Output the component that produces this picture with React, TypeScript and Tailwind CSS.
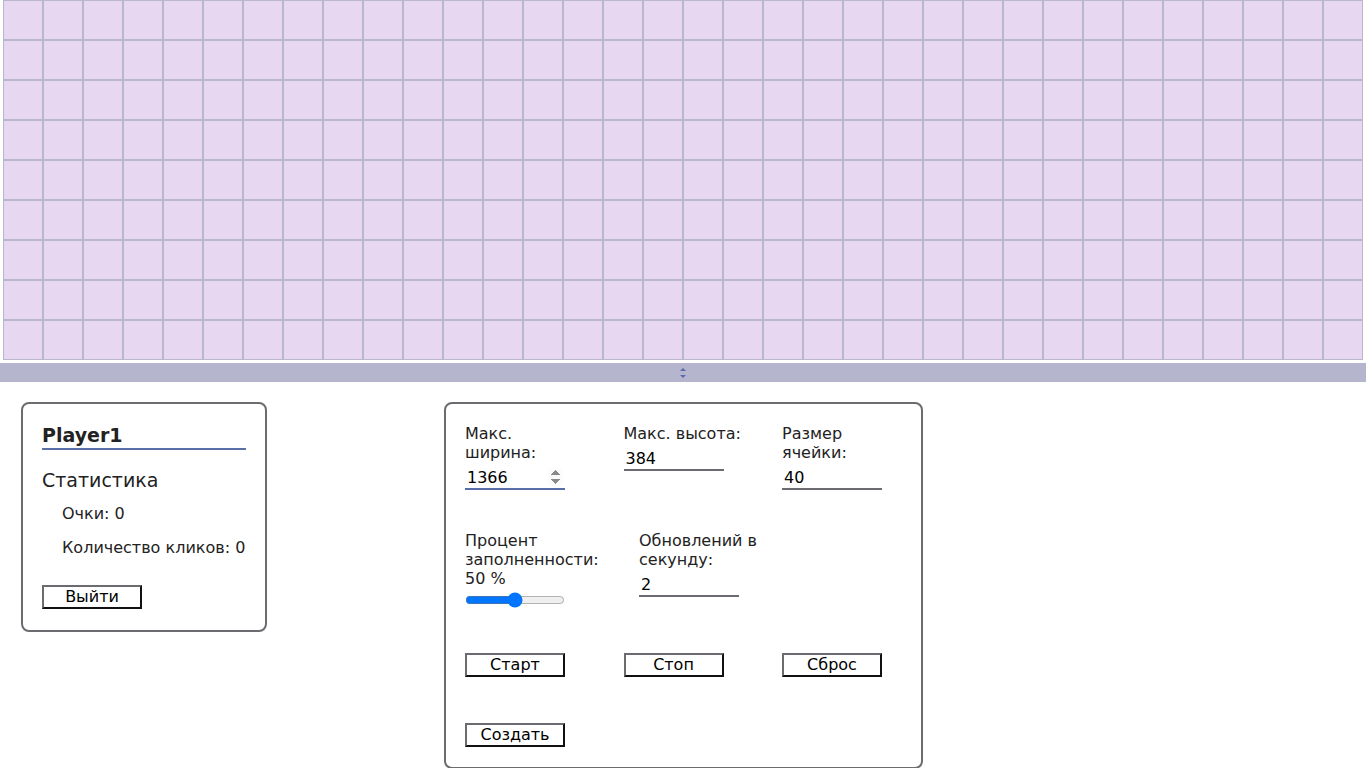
import { useState } from "react";

const COLS = 34;
const ROWS = 9;

function Field({
  label,
  value,
  onChange,
  number,
  focused,
  width,
}: {
  label: string;
  value: string;
  onChange: (v: string) => void;
  number?: boolean;
  focused?: boolean;
  width?: string;
}) {
  return (
    <label className={`flex flex-col ${width || ""}`}>
      <span className="leading-[19px]">{label}</span>
      <input
        type={number ? "number" : "text"}
        autoFocus={focused}
        value={value}
        onChange={(e) => onChange(e.target.value)}
        className={`w-[100px] h-[28px] px-[2px] pt-[4px] text-[16px] text-black bg-transparent outline-none border-b-2 ${
          focused ? "border-[#5a6ea8]" : "border-[#6b6b70]"
        }`}
      />
    </label>
  );
}

function Btn({ children }: { children: React.ReactNode }) {
  return (
    <button className="w-[100px] h-[24px] bg-white text-black text-[16px] leading-[18px] border-2 border-t-[#6b6b70] border-l-[#6b6b70] border-r-[#111] border-b-[#111]">
      {children}
    </button>
  );
}

export default function App() {
  const [width, setWidth] = useState("1366");
  const [height, setHeight] = useState("384");
  const [cell, setCell] = useState("40");
  const [fill, setFill] = useState(50);
  const [ups, setUps] = useState("2");

  return (
    <div
      className="min-h-screen bg-white text-[#222] text-[16px]"
      style={{ fontFamily: '"DejaVu Sans", Verdana, sans-serif' }}
    >
      {/* Field */}
      <div className="flex justify-center">
        <div className="grid grid-cols-[repeat(34,40px)]">
          {Array.from({ length: COLS * ROWS }).map((_, i) => (
            <div
              key={i}
              className="w-[40px] h-[40px] bg-[#e8d7f1] border border-[#b8b8cc]"
            />
          ))}
        </div>
      </div>

      {/* Resize bar */}
      <div className="mt-[3px] h-[19px] bg-[#b5b5cd] flex items-center justify-center">
        <svg width="8" height="12" viewBox="0 0 8 12">
          <path d="M4 1 L7 4 L1 4 Z" fill="#5a6bb0" />
          <path d="M1 8 L7 8 L4 11 Z" fill="#5a6bb0" />
        </svg>
      </div>

      <div className="flex items-start pt-[20px] pl-[21px] gap-[177px]">
        {/* Player */}
        <div className="w-[246px] border-2 border-[#6b6b70] rounded-[8px] px-[19px] pt-[20px] pb-[21px]">
          <h3 className="text-[19px] font-bold leading-[22px] pb-[2px] border-b-2 border-[#5a6ea8] text-[#222]">
            Player1
          </h3>
          <h4 className="mt-[19px] text-[19px] leading-[22px]">Статистика</h4>
          <ul className="pl-[20px] mt-[13px] flex flex-col gap-[15px] leading-[19px]">
            <li>Очки: 0</li>
            <li>Количество кликов: 0</li>
          </ul>
          <div className="mt-[28px]">
            <Btn>Выйти</Btn>
          </div>
        </div>

        {/* Controls */}
        <div className="w-[479px] border-2 border-[#6b6b70] rounded-[8px] px-[19px] pt-[20px] pb-[20px]">
          <div className="grid grid-cols-[118px_118px_118px] gap-x-[40.5px] items-start">
            <Field label="Макс. ширина:" value={width} onChange={setWidth} number focused />
            <Field label="Макс. высота:" value={height} onChange={setHeight} />
            <Field label="Размер ячейки:" value={cell} onChange={setCell} />
          </div>

          <div className="flex items-start gap-[40px] mt-[41px]">
            <label className="flex flex-col w-[134px]">
              <span className="leading-[19px]">Процент заполненности:</span>
              <span className="leading-[19px]">{fill} %</span>
              <input
                type="range"
                min={0}
                max={100}
                value={fill}
                onChange={(e) => setFill(Number(e.target.value))}
                className="w-[100px] h-[16px] mt-[4px]"
              />
            </label>
            <Field
              label="Обновлений в секунду:"
              value={ups}
              onChange={setUps}
              width="w-[120px]"
            />
          </div>

          <div className="grid grid-cols-[118px_118px_118px] gap-x-[40.5px] mt-[45px]">
            <Btn>Старт</Btn>
            <Btn>Стоп</Btn>
            <Btn>Сброс</Btn>
          </div>

          <div className="mt-[46px]">
            <Btn>Создать</Btn>
          </div>
        </div>
      </div>
    </div>
  );
}
